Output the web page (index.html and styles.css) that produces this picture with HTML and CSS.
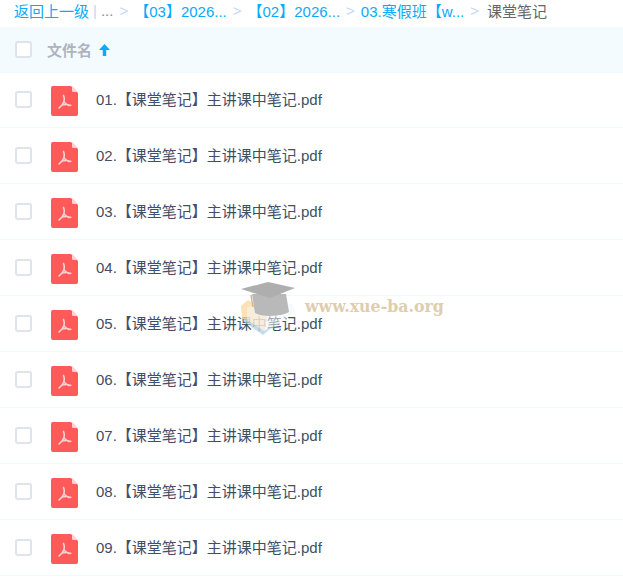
FILE: index.html
```html
<!DOCTYPE html>
<html lang="en">
<head>
    <meta charset="UTF-8">
    <meta name="viewport" content="width=device-width, initial-scale=1.0">
    <title>课堂笔记</title>
    <link rel="stylesheet" href="styles.css">
</head>
<body>
    <svg class="sprite" width="0" height="0">
        <symbol id="pdf-icon" viewBox="0 0 27 30">
            <path d="M2 0H20L27 7V28a2 2 0 0 1-2 2H2a2 2 0 0 1-2-2V2a2 2 0 0 1 2-2z" fill="#ff5a5a"/>
            <path d="M21 0L27 6H22a1 1 0 0 1-1-1z" fill="#ffd0d0"/>
            <path d="M12.500 9.500c1.200 3 1 5.500-.5 8-1 1.800-2.500 3.300-4 4.500M12.800 15.500c1.200 1.800 2.500 2.800 4 3.500 1 .5 2.200.5 3 .3M10.800 19c2-.4 4.500-.7 7-.3" fill="none" stroke="#ffcfcf" stroke-width="1.600" stroke-linecap="round"/>
        </symbol>
    </svg>

    <div class="crumbs">
        <a class="crumb">返回上一级</a>
        <span class="crumb-bar">|</span>
        <span class="crumb-more">...</span>
        <span class="crumb-sep">&gt;</span>
        <a class="crumb">【03】2026...</a>
        <span class="crumb-sep">&gt;</span>
        <a class="crumb">【02】2026...</a>
        <span class="crumb-sep">&gt;</span>
        <a class="crumb">03.寒假班【w...</a>
        <span class="crumb-sep">&gt;</span>
        <span class="crumb-current">课堂笔记</span>
    </div>

    <div class="list-head">
        <span class="check"></span>
        <span class="head-name">文件名</span>
        <svg class="sort-arrow" width="11" height="12" viewBox="0 0 11 12">
            <path d="M5.500 0L11 6H7.200V12H3.800V6H0z" fill="#09aaff"/>
        </svg>
    </div>

    <ul class="file-list">
        <li class="file-row"><span class="check"></span><svg class="file-icon"><use href="#pdf-icon"/></svg><span class="file-name">01.【课堂笔记】主讲课中笔记.pdf</span></li>
        <li class="file-row"><span class="check"></span><svg class="file-icon"><use href="#pdf-icon"/></svg><span class="file-name">02.【课堂笔记】主讲课中笔记.pdf</span></li>
        <li class="file-row"><span class="check"></span><svg class="file-icon"><use href="#pdf-icon"/></svg><span class="file-name">03.【课堂笔记】主讲课中笔记.pdf</span></li>
        <li class="file-row"><span class="check"></span><svg class="file-icon"><use href="#pdf-icon"/></svg><span class="file-name">04.【课堂笔记】主讲课中笔记.pdf</span></li>
        <li class="file-row"><span class="check"></span><svg class="file-icon"><use href="#pdf-icon"/></svg><span class="file-name">05.【课堂笔记】主讲课中笔记.pdf</span></li>
        <li class="file-row"><span class="check"></span><svg class="file-icon"><use href="#pdf-icon"/></svg><span class="file-name">06.【课堂笔记】主讲课中笔记.pdf</span></li>
        <li class="file-row"><span class="check"></span><svg class="file-icon"><use href="#pdf-icon"/></svg><span class="file-name">07.【课堂笔记】主讲课中笔记.pdf</span></li>
        <li class="file-row"><span class="check"></span><svg class="file-icon"><use href="#pdf-icon"/></svg><span class="file-name">08.【课堂笔记】主讲课中笔记.pdf</span></li>
        <li class="file-row"><span class="check"></span><svg class="file-icon"><use href="#pdf-icon"/></svg><span class="file-name">09.【课堂笔记】主讲课中笔记.pdf</span></li>
    </ul>

    <!-- site watermark sits over the list -->
    <div class="watermark">
        <svg class="watermark-cap" width="58" height="56" viewBox="0 0 58 56">
            <path d="M1 26L8 20L28 32L24 54L2 38z" fill="#fdd9a0" fill-opacity="0.85"/>
            <path d="M7 27L52 24L56 32L30 50L24 52L7 40z" fill="#f3f5f7" fill-opacity="0.6"/>
            <path d="M3 37L24 51L30 47V49L23 55L4 42z" fill="#a9cfee" fill-opacity="0.75"/>
            <path d="M12 14L46 14L49 32C40 37 22 37 15 33z" fill="#b2b2b2"/>
            <path d="M1 9L28 2L55 8L30 18z" fill="#a6a6a6"/>
            <path d="M11 15L13 27" stroke="#c9b48e" stroke-width="1.500" fill="none"/>
        </svg>
        <span class="watermark-text">www.xue-ba.org</span>
    </div>
</body>
</html>
```

FILE: styles.css
```css
* {
    box-sizing: border-box;
}
body {
    font-family: "Liberation Sans", "Noto Sans CJK SC", sans-serif;
    font-size: 15px;
    color: #424e67;
    background-color: #fff;
    margin: 0;
    padding: 0;
    height: 581px;
    overflow: hidden;
    position: relative;
}
.sprite {
    position: absolute;
}
.crumbs {
    display: flex;
    align-items: center;
    height: 27px;
    padding: 0 0 6px 14px;
    white-space: nowrap;
}
.crumb {
    color: #09aaff;
    text-decoration: none;
}
.crumb-bar {
    color: #c4d8f4;
    margin-left: 4px;
}
.crumb-more {
    color: #878c9c;
    margin-left: 4px;
}
.crumb-sep {
    color: #c4d8f4;
    margin: 0 6px;
}
.crumb-current {
    color: #666;
    margin-left: 2px;
}
.list-head {
    display: flex;
    align-items: center;
    height: 46px;
    padding-left: 15px;
    background-color: #f4fbff;
    border-bottom: 1px solid #f2f6fd;
}
.head-name {
    margin-left: 15px;
    font-weight: bold;
    color: #afb3bf;
}
.sort-arrow {
    margin-left: 7px;
}
.check {
    width: 17px;
    height: 17px;
    border: 2px solid #dfe3ec;
    border-radius: 3px;
    background-color: #fff;
    flex-shrink: 0;
}
.file-list {
    list-style: none;
    margin: -1px 0 0;
    padding: 0;
}
.file-row {
    display: flex;
    align-items: center;
    height: 56px;
    padding-left: 15px;
    border-bottom: 1px solid #f2f6fd;
}
.file-icon {
    width: 27px;
    height: 30px;
    margin: 2px 0 0 19px;
    flex-shrink: 0;
}
.file-name {
    margin: 0 0 3px 18px;
    color: #424e67;
}
.watermark {
    position: absolute;
    left: 240px;
    top: 280px;
    display: flex;
    align-items: center;
    opacity: 0.9;
}
.watermark-cap {
    flex-shrink: 0;
}
.watermark-text {
    margin: -3px 0 0 7px;
    font-family: "DejaVu Serif", serif;
    font-weight: bold;
    font-size: 15.800px;
    color: #dcc8a6;
}
```
